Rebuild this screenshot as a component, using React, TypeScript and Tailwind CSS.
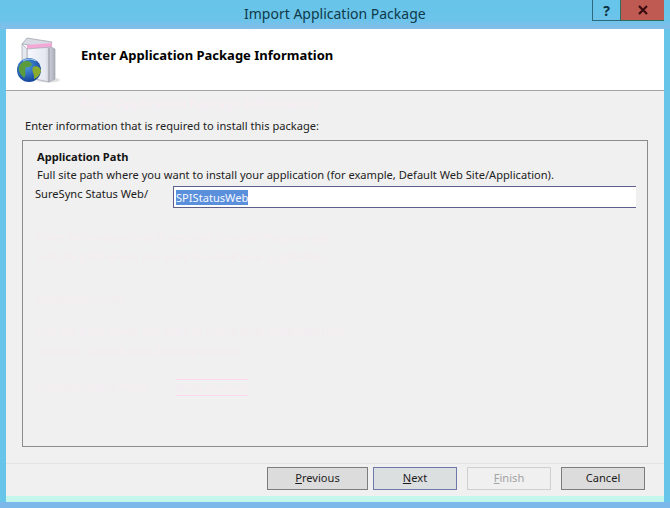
function PackageIcon() {
  return (
    <svg width="50" height="50" viewBox="0 0 50 50" className="shrink-0">
      <defs>
        <linearGradient id="box" x1="0" y1="0" x2="1" y2="0">
          <stop offset="0" stopColor="#f6f8fc" />
          <stop offset="0.65" stopColor="#e6e8f2" />
          <stop offset="1" stopColor="#a9adb8" />
        </linearGradient>
        <radialGradient id="globe" cx="0.4" cy="0.35" r="0.7">
          <stop offset="0" stopColor="#4f9be0" />
          <stop offset="1" stopColor="#123f96" />
        </radialGradient>
      </defs>
      <ellipse cx="33" cy="43" rx="12" ry="2.5" fill="#c9c9cc" opacity="0.6" />
      <path d="M7 7 L12 1 L37 5 L34 11 Z" fill="#d9dbe4" stroke="#9a9ca8" strokeWidth="0.7" />
      <path d="M12 8 L37 6 L37 11 L12 12 Z" fill="#f3a8d6" />
      <path d="M12 12 L36 10 L40 12 L40 42 L34 45 L12 40 Z" fill="url(#box)" stroke="#a4a6b2" strokeWidth="0.7" />
      <path d="M34 11 L34 45" stroke="#8d909c" strokeWidth="1" />
      <path d="M7 7 L12 12 L12 24 L7 24 Z" fill="#e6e8ef" stroke="#a4a6b2" strokeWidth="0.7" />
      <circle cx="14" cy="33" r="12" fill="url(#globe)" />
      <path d="M4 30 C7 23 14 23 16 26 C19 28 14 31 11 30 C9 34 12 38 9 41 C6 38 3 34 4 30 Z" fill="#5a9c3c" />
      <path d="M18 30 C22 28 26 31 26 34 C25 38 22 41 19 42 C20 37 16 34 18 30 Z" fill="#8aab2e" />
      <path d="M8 24 C12 21 18 22 21 24" stroke="#a8d0f0" strokeWidth="1.4" fill="none" opacity="0.8" />
    </svg>
  );
}

function WizardButton({ label, hot, state, className }: { label: string; hot?: string; state?: 'focus' | 'disabled'; className: string }) {
  const cls =
    state === 'focus'
      ? 'border-[#6f78a8] bg-[#dcdfe0] text-[#1c1c1c]'
      : state === 'disabled'
        ? 'border-[#cfcfcf] bg-[#f0f0f0] text-[#a3a3a3]'
        : 'border-[#7c7c7c] bg-[#dcdcdc] text-[#1c1c1c]';
  return (
    <div className={`flex h-[23px] items-center justify-center border ${cls} ${className}`}>
      {hot ? <span className="underline">{hot}</span> : null}
      {label}
    </div>
  );
}

export default function App() {
  return (
    <div className="flex h-[508px] w-[670px] flex-col overflow-hidden bg-[#66c5e9] font-['Noto_Sans','Open_Sans',sans-serif] text-[11.1px] text-[#1a1a1a]">
      <div className="flex h-[29px] shrink-0 items-start bg-[linear-gradient(#66c5e9,#6cc3ea_70%,#84bdea)]">
        <div className="flex-1 pl-[244px] pt-[4px] text-[14px] leading-[20px] text-[#0f3a4a]">Import Application Package</div>
        <div className="flex h-[21px] w-[28px] items-center justify-center border-b border-l border-[#2d6b7c] text-[14px] font-bold text-[#0b3140]">?</div>
        <div className="mr-[6px] flex h-[21px] w-[44px] items-center justify-center border-b border-l border-[#2e6d5e] bg-[#bf5a52]">
          <svg width="10" height="10" viewBox="0 0 10 10">
            <path d="M1 1 L9 9 M9 1 L1 9" stroke="#3a0d10" strokeWidth="2.2" />
          </svg>
        </div>
      </div>
      <div className="mx-[6px] flex flex-1 flex-col">
        <div className="flex h-[62px] shrink-0 items-start border-b border-[#a3a3a3] bg-white pl-[9px] pt-[8px]">
          <PackageIcon />
          <div className="pl-[16px] pt-[9px] text-[13px] font-bold leading-[18px] text-black">Enter Application Package Information</div>
        </div>
        <div className="flex flex-1 flex-col bg-[#f0f0f0]">
          <div className="pl-[75px] pt-[3px] text-[13px] leading-[18px] text-[#f7ecf3]">Enter Application Package Information</div>
          <div className="pl-[19px] pt-[6px] leading-[16px] text-[#222]">Enter information that is required to install this package:</div>
          <div className="mx-[16px] mt-[6px] flex h-[307px] flex-col border border-[#8c8c8c] pl-[14px]">
            <div className="pt-[8px] font-bold leading-[16px] text-[#141414]">Application Path</div>
            <div className="pt-[2px] leading-[16px] text-[#222]">Full site path where you want to install your application (for example, Default Web Site/Application).</div>
            <div className="mt-[3px] flex items-start">
              <div className="-ml-[2px] w-[138px] leading-[16px]">SureSync Status Web/</div>
              <div className="mr-[11px] flex h-[22px] flex-1 items-center border-y border-l border-[#5d5f8c] bg-white pl-[2px]">
                <span className="bg-[#5a8fdc] leading-[15px] text-[#f4f8ff]">SPIStatusWeb</span>
              </div>
            </div>
            <div className="pt-[21px] leading-[16px] text-[#f5ecf1]">Enter information that is required to install this package:</div>
            <div className="pt-[4px] leading-[16px] text-[#f5ecf1]">Full site path where you want to install your application</div>
            <div className="pt-[26px] leading-[16px] text-[#f5ecf1]">Application Path</div>
            <div className="pt-[16px] leading-[16px] text-[#f5ecf1]">Full site path where you want to install your application (for</div>
            <div className="pt-[4px] leading-[16px] text-[#f5ecf1]">example, Default Web Site/Application).</div>
            <div className="mt-[20px] flex items-start text-[#f5ecf1]">
              <div className="-ml-[2px] w-[141px] leading-[16px]">SureSync Status Web/</div>
              <span className="border-y border-[#fbd8ec] leading-[15px]">SPIStatusWeb</span>
            </div>
          </div>
          <div className="mt-[16px] h-px bg-[#e4e4e4]" />
          <div className="flex justify-end pr-[19px] pt-[3px]">
            <WizardButton hot="P" label="revious" className="w-[101px]" />
            <WizardButton hot="N" label="ext" state="focus" className="ml-[5px] w-[84px]" />
            <WizardButton hot="F" label="inish" state="disabled" className="ml-[10px] w-[84px]" />
            <WizardButton label="Cancel" className="ml-[10px] w-[84px]" />
          </div>
          <div className="flex-1" />
        </div>
        <div className="h-[6px] shrink-0 bg-[#c3f7ec]" />
      </div>
      <div className="h-[6px] shrink-0 bg-[#7cb8ea]" />
    </div>
  );
}
